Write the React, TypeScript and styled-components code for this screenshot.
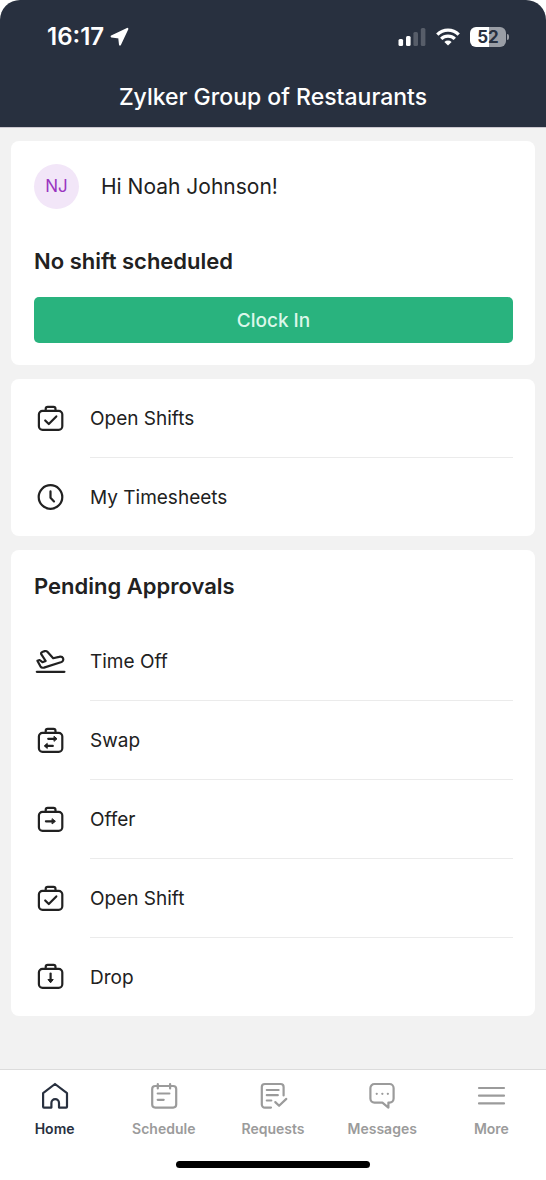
import React from "react";
import styled, { createGlobalStyle } from "styled-components";

const navy = "#28303f";
const ink = "#212121";
const muted = "#9b9b9b";

const GlobalStyle = createGlobalStyle`
  *, *::before, *::after { box-sizing: border-box; }
  body {
    margin: 0;
    background: #fff;
    color: ${ink};
    font-family: Inter, "Liberation Sans", sans-serif;
  }
  h1, h2, p, ul { margin: 0; padding: 0; }
  ul { list-style: none; }
  svg { display: block; flex: none; }
`;

const Screen = styled.div`
  display: flex;
  flex-direction: column;
  min-height: 100vh;
`;

const Header = styled.header`
  background: ${navy};
  color: #fff;
  border-radius: 20px 20px 0 0;
  padding: 22px 0 15px;
`;

const StatusBar = styled.div`
  display: flex;
  align-items: center;
  justify-content: space-between;
  height: 30px;
  padding: 0 37px 0 47px;
`;

const StatusGroup = styled.div<{ $gap: number }>`
  display: flex;
  align-items: center;
  gap: ${(p) => p.$gap}px;
`;

const Clock = styled.span`
  font-size: 24px;
  line-height: 30px;
  font-weight: 600;
`;

const Battery = styled.span`
  display: flex;
  align-items: center;
  gap: 1px;
  &::after {
    content: "";
    width: 2px;
    height: 6px;
    border-radius: 0 2px 2px 0;
    background: #9a9ea6;
  }
`;

const BatteryLevel = styled.span`
  width: 36px;
  height: 20px;
  border-radius: 6px;
  background: linear-gradient(90deg, #fff 52%, #9a9ea6 52%);
  color: ${navy};
  font-size: 17px;
  line-height: 20px;
  font-weight: 700;
  text-align: center;
`;

const Title = styled.h1`
  margin-top: 30px;
  font-size: 23px;
  line-height: 30px;
  font-weight: 500;
  text-align: center;
`;

const Content = styled.main`
  flex: 1;
  display: flex;
  flex-direction: column;
  gap: 14px;
  padding: 13px 11px 48px;
  border-top: 1px solid #cbc7cf;
  background: #f2f2f2;
`;

const Card = styled.section`
  background: #fff;
  border-radius: 8px;
  padding: 0 22px 0 23px;
`;

const GreetingCard = styled(Card)`
  padding-top: 23px;
  padding-bottom: 22px;
`;

const Greeting = styled.div`
  display: flex;
  align-items: center;
  gap: 22px;
  font-size: 21px;
  line-height: 28px;
`;

const Avatar = styled.span`
  width: 45px;
  height: 45px;
  border-radius: 50%;
  background: #f2e6f8;
  color: #9a35c0;
  font-size: 17px;
  line-height: 45px;
  text-align: center;
`;

const Heading = styled.h2`
  font-size: 22px;
  line-height: 30px;
  font-weight: 600;
`;

const ShiftHeading = styled(Heading)`
  margin: 37px 0 21px;
`;

const ListHeading = styled(Heading)`
  padding: 21px 0;
`;

const ClockInButton = styled.button`
  display: block;
  width: 100%;
  height: 46px;
  padding: 2px 0 0;
  border: 0;
  border-radius: 5px;
  background: #29b37e;
  color: #dcf7ea;
  font: 500 19px/24px Inter, "Liberation Sans", sans-serif;
  cursor: pointer;
`;

const Row = styled.li`
  display: flex;
  &:last-child > a { height: 78px; }
  &:last-child > a > span { border-bottom: 0; }
`;

const RowLink = styled.a`
  flex: 1;
  display: flex;
  align-items: center;
  gap: 24px;
  height: 79px;
  color: ${ink};
  text-decoration: none;
`;

const RowLabel = styled.span`
  flex: 1;
  align-self: stretch;
  display: flex;
  align-items: center;
  padding-top: 2px;
  border-bottom: 1px solid #ebebeb;
  font-size: 19px;
  line-height: 24px;
`;

const Footer = styled.footer`
  padding-bottom: 12px;
  border-top: 1px solid #dcdcdc;
  background: #fff;
`;

const TabBar = styled.nav`
  display: flex;
`;

const Tab = styled.a<{ $active?: boolean }>`
  flex: 1 0 0;
  display: flex;
  flex-direction: column;
  align-items: center;
  gap: 7px;
  padding-top: 10px;
  color: ${(p) => (p.$active ? navy : muted)};
  font-size: 14px;
  line-height: 20px;
  font-weight: 600;
  text-decoration: none;
`;

const HomeIndicator = styled.div`
  width: 194px;
  height: 7px;
  margin: 22px auto 0;
  border-radius: 4px;
  background: #000;
`;

const LineIcon = ({ children }: { children: React.ReactNode }) => (
  <svg width="32" height="32" viewBox="0 0 32 32" fill="none" stroke="currentColor" strokeWidth="2.2" strokeLinecap="round" strokeLinejoin="round" aria-hidden="true">
    {children}
  </svg>
);

const Case = ({ children }: { children: React.ReactNode }) => (
  <LineIcon>
    <rect x="4.9" y="7.9" width="23.4" height="18.9" rx="3.6" />
    <path d="M11.7 7.9V5.9a2 2 0 0 1 2-2h5.8a2 2 0 0 1 2 2v2" />
    {children}
  </LineIcon>
);

const checkCase = (
  <Case>
    <path d="m11.2 17.5 3.6 3.5 7.5-7.6" />
  </Case>
);

const clockIcon = (
  <LineIcon>
    <circle cx="16.5" cy="16" r="11.8" />
    <path d="M16.5 10.4v6.4l3.5 3.6" />
  </LineIcon>
);

const planeIcon = (
  <LineIcon>
    <path d="M2.8 25.8h27.6" />
    <path d="M3.4 14.7 5.6 14l2.8 2.2 3.3-1.2-4.5-6.8C6.8 7 7.6 6.2 8.8 5.8l2-.7c1.2-.3 2 .1 2.8 1l5.6 6.1 5.8-1.3c2-.5 3.4 0 4.1 1.4.6 1.7-.3 3.3-2.3 4L10 21.6c-1.6.4-2.8 0-3.6-1.3z" />
  </LineIcon>
);

const swapCase = (
  <Case>
    <path d="M14.2 13.8h6.6M18.8 20.9h-7" />
    <path d="m20.3 11.5 2.7 2.3-2.7 2.3zM13 18.6l-2.7 2.3 2.7 2.3z" fill="currentColor" strokeWidth="1" />
  </Case>
);

const offerCase = (
  <Case>
    <path d="M11.9 17.3h7" />
    <path d="m18.4 14.9 3 2.4-3 2.4z" fill="currentColor" strokeWidth="1" />
  </Case>
);

const dropCase = (
  <Case>
    <path d="M16.6 12.6v7" />
    <path d="m14.2 18.8 2.4 3 2.4-3z" fill="currentColor" strokeWidth="1" />
  </Case>
);

const homeIcon = (
  <LineIcon>
    <path d="M4.1 13.2 16 4l12 9.2v13.5a.9.9 0 0 1-.9.9H20V23a3.8 3.8 0 0 0-7.6 0v4.6H5a.9.9 0 0 1-.9-.9z" />
  </LineIcon>
);

const scheduleIcon = (
  <LineIcon>
    <rect x="4.2" y="6" width="24" height="21.6" rx="3" />
    <path d="M9.8 4v4.4M22.1 4v4.4M9.7 13.5h11.7M9.7 19.8h6" />
  </LineIcon>
);

const requestsIcon = (
  <LineIcon>
    <path d="M14 27.6H7.8a3 3 0 0 1-3-3V7a3 3 0 0 1 3-3h15.8a3 3 0 0 1 3 3v8.5" />
    <path d="M9.8 10h11.8M9.8 15.2h11M9.8 20.5h4.5M18.3 22.1l3.8 3.7 7.2-6.9" />
  </LineIcon>
);

const messagesIcon = (
  <LineIcon>
    <path d="M8.4 4h15.2a4 4 0 0 1 4 4v10.6a4 4 0 0 1-4 4h-1.2v5l-6-5h-8a4 4 0 0 1-4-4V8a4 4 0 0 1 4-4z" />
    <path d="M10.7 13.8h.1M16.3 13.8h.1M21.8 13.8h.1" />
  </LineIcon>
);

const moreIcon = (
  <LineIcon>
    <path d="M4 8h25M4 15.7h25M4 23.4h25" />
  </LineIcon>
);

type Item = { label: string; icon: React.ReactNode };

const shiftItems: Item[] = [
  { label: "Open Shifts", icon: checkCase },
  { label: "My Timesheets", icon: clockIcon },
];

const approvalItems: Item[] = [
  { label: "Time Off", icon: planeIcon },
  { label: "Swap", icon: swapCase },
  { label: "Offer", icon: offerCase },
  { label: "Open Shift", icon: checkCase },
  { label: "Drop", icon: dropCase },
];

const tabs: Item[] = [
  { label: "Home", icon: homeIcon },
  { label: "Schedule", icon: scheduleIcon },
  { label: "Requests", icon: requestsIcon },
  { label: "Messages", icon: messagesIcon },
  { label: "More", icon: moreIcon },
];

const LinkList = ({ items }: { items: Item[] }) => (
  <ul>
    {items.map((item) => (
      <Row key={item.label}>
        <RowLink href="#">
          {item.icon}
          <RowLabel>{item.label}</RowLabel>
        </RowLink>
      </Row>
    ))}
  </ul>
);

export default function App() {
  return (
    <Screen>
      <GlobalStyle />
      <Header>
        <StatusBar>
          <StatusGroup $gap={6}>
            <Clock>16:17</Clock>
            <svg width="20" height="20" viewBox="0 0 20 20" fill="#fff" stroke="#fff" strokeWidth="2" strokeLinejoin="round" aria-hidden="true">
              <path d="M17.4 1.8 1.6 9.4l7.6 1.2.8 7z" />
            </svg>
          </StatusGroup>
          <StatusGroup $gap={10}>
            <svg width="28" height="18" viewBox="0 0 28 18" fill="#fff" aria-hidden="true">
              <rect x="0.5" y="11" width="4.6" height="7" rx="1.5" />
              <rect x="8" y="8" width="4.6" height="10" rx="1.5" />
              <rect x="15.4" y="4" width="4.6" height="14" rx="1.5" opacity=".22" />
              <rect x="22.8" y="0" width="4.6" height="18" rx="1.5" opacity=".22" />
            </svg>
            <svg width="24" height="18" viewBox="0 0 24 18" fill="none" stroke="#fff" strokeWidth="3.3" aria-hidden="true">
              <path d="M1.3 6.6a15.2 15.2 0 0 1 21.4 0M5.2 10.9a9.6 9.6 0 0 1 13.6 0" />
              <path d="m12 17.6-3.6-3.7a5.1 5.1 0 0 1 7.2 0z" fill="#fff" stroke="none" />
            </svg>
            <Battery>
              <BatteryLevel>52</BatteryLevel>
            </Battery>
          </StatusGroup>
        </StatusBar>
        <Title>Zylker Group of Restaurants</Title>
      </Header>
      <Content>
        <GreetingCard>
          <Greeting>
            <Avatar>NJ</Avatar>
            <p>Hi Noah Johnson!</p>
          </Greeting>
          <ShiftHeading>No shift scheduled</ShiftHeading>
          <ClockInButton type="button">Clock In</ClockInButton>
        </GreetingCard>
        <Card>
          <LinkList items={shiftItems} />
        </Card>
        <Card>
          <ListHeading>Pending Approvals</ListHeading>
          <LinkList items={approvalItems} />
        </Card>
      </Content>
      <Footer>
        <TabBar>
          {tabs.map((tab, i) => (
            <Tab key={tab.label} href="#" $active={i === 0}>
              {tab.icon}
              {tab.label}
            </Tab>
          ))}
        </TabBar>
        <HomeIndicator />
      </Footer>
    </Screen>
  );
}
